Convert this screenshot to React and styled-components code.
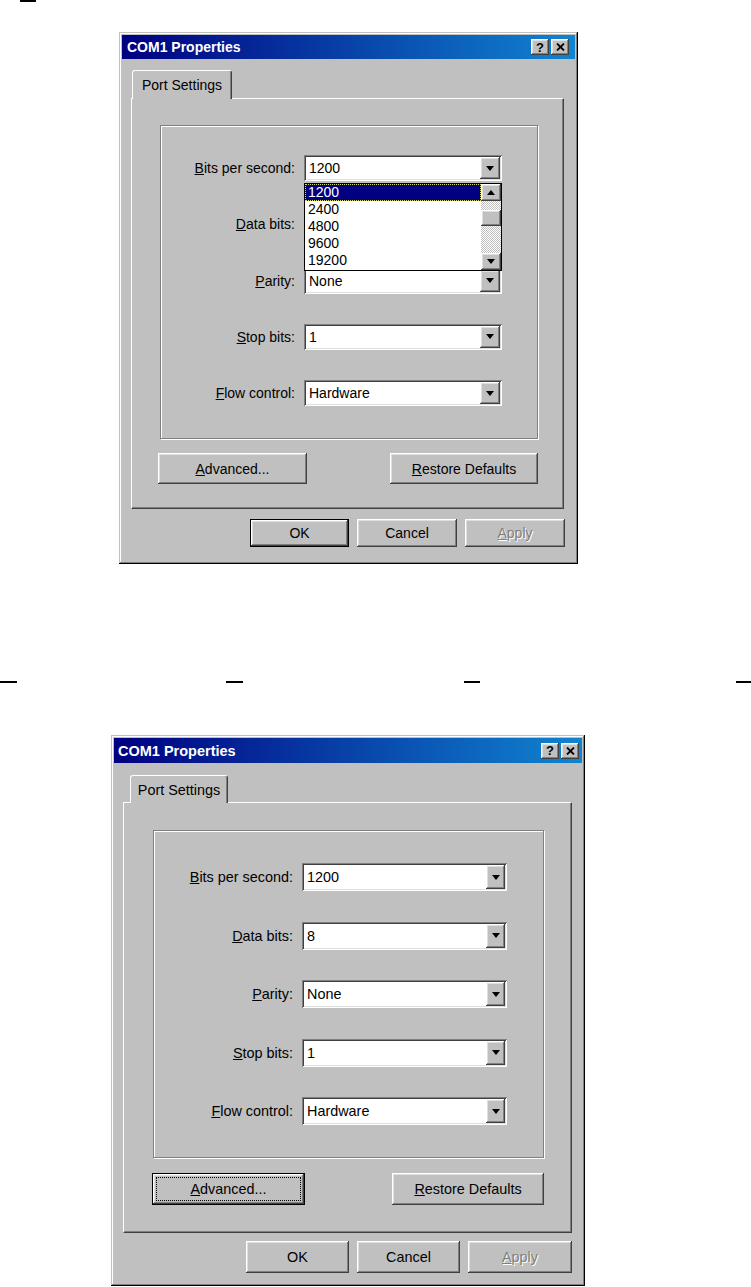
import React from "react";
import styled, { createGlobalStyle, css } from "styled-components";

const GlobalStyle = createGlobalStyle`
  html, body { margin: 0; padding: 0; background: #ffffff; }
  body { font-family: "Liberation Sans", Arial, sans-serif; color: #000; }
`;

const raised = css`
  box-shadow: inset -1px -1px #404040, inset 1px 1px #ffffff,
    inset -2px -2px #808080, inset 2px 2px #dfdfdf;
`;
const sunken = css`
  box-shadow: inset 1px 1px #808080, inset -1px -1px #ffffff,
    inset 2px 2px #404040, inset -2px -2px #dfdfdf;
`;

const Page = styled.div`
  width: 751px;
  height: 1287px;
  overflow: hidden;
  display: flex;
  flex-direction: column;
  align-items: flex-start;
`;

const TopMark = styled.div`
  margin-left: 20px;
  width: 16px;
  height: 2px;
  background: #000;
`;

const DashRow = styled.div`
  display: flex;
  margin-top: 117px;
  height: 2px;
`;

const Dash = styled.span`
  display: block;
  width: ${(p) => p.$w}px;
  height: 2px;
  margin-left: ${(p) => p.$gap}px;
  background: #000;
`;

const Window = styled.div`
  margin: ${({ $m }) => $m.mt}px 0 0 ${({ $m }) => $m.ml}px;
  width: ${({ $m }) => $m.w}px;
  height: ${({ $m }) => $m.h}px;
  box-sizing: border-box;
  padding: 3px;
  background: #c0c0c0;
  box-shadow: inset -1px -1px #000000, inset 1px 1px #c0c0c0,
    inset -2px -2px #808080, inset 2px 2px #ffffff;
  display: flex;
  flex-direction: column;
`;

const TitleBar = styled.div`
  height: ${({ $m }) => $m.titleH}px;
  display: flex;
  align-items: center;
  padding: 0 ${({ $m }) => $m.ctrlMr}px 0 ${({ $m }) => $m.titlePad}px;
  background: linear-gradient(to right, #000080, #1084d0);
  color: #fff;
  font-weight: bold;
  font-size: ${({ $m }) => $m.titleFs}px;
`;

const TitleText = styled.span`
  flex: 1;
  white-space: nowrap;
`;

const TitleControls = styled.div`
  display: flex;
  gap: 2px;
`;

const TitleButton = styled.span`
  width: 18px;
  height: 16px;
  box-sizing: border-box;
  background: #c0c0c0;
  ${raised}
  display: flex;
  align-items: center;
  justify-content: center;
  color: #000;
  font-size: 13px;
  font-weight: bold;
  line-height: 1;
`;

const TabStrip = styled.div`
  display: flex;
  margin-top: ${({ $m }) => $m.tabT}px;
  padding-left: ${({ $m }) => $m.tabL}px;
  position: relative;
  z-index: 1;
`;

const Tab = styled.div`
  width: ${({ $m }) => $m.tabW}px;
  height: ${({ $m }) => $m.tabH}px;
  margin-bottom: -1px;
  box-sizing: border-box;
  background: #c0c0c0;
  border-left: 1px solid #fff;
  border-top: 1px solid #fff;
  border-right: 1px solid #404040;
  border-radius: 3px 3px 0 0;
  box-shadow: inset -1px 0 #808080;
  display: flex;
  align-items: center;
  justify-content: center;
  font-size: ${({ $m }) => $m.fs}px;
`;

const Panel = styled.div`
  margin: 0 ${({ $m }) => $m.panelMr}px 0 ${({ $m }) => $m.panelMl}px;
  height: ${({ $m }) => $m.panelH}px;
  box-sizing: border-box;
  border-top: 1px solid #fff;
  border-left: 1px solid #fff;
  border-right: 1px solid #404040;
  border-bottom: 1px solid #404040;
  box-shadow: inset -1px -1px #808080;
  display: flex;
  flex-direction: column;
  align-items: flex-start;
`;

const Group = styled.div`
  margin: ${({ $m }) => $m.groupT}px 0 0 ${({ $m }) => $m.groupL}px;
  width: ${({ $m }) => $m.groupW}px;
  height: ${({ $m }) => $m.groupH}px;
  box-sizing: border-box;
  padding-top: ${({ $m }) => $m.rowsPt}px;
  border: 1px solid #808080;
  box-shadow: inset 1px 1px #fff, 1px 1px #fff;
  display: grid;
  grid-template-columns: ${({ $m }) => `${$m.labelW}px ${$m.comboW}px`};
  grid-auto-rows: ${({ $m }) => $m.rowH}px;
  column-gap: 9px;
  row-gap: ${({ $m }) => $m.rowGap}px;
  align-content: start;
`;

const Label = styled.span`
  align-self: center;
  text-align: right;
  white-space: nowrap;
  font-size: ${({ $m }) => $m.fs}px;
`;

const Combo = styled.div`
  position: relative;
  box-sizing: border-box;
  padding: 2px;
  background: #fff;
  ${sunken}
  display: flex;
  align-items: stretch;
`;

const ComboText = styled.span`
  flex: 1;
  display: flex;
  align-items: center;
  padding-left: 3px;
  font-size: ${({ $m }) => $m.fs}px;
  visibility: ${(p) => (p.$covered ? "hidden" : "visible")};
`;

const DropButton = styled.span`
  width: ${({ $m }) => $m.dropW}px;
  box-sizing: border-box;
  background: #c0c0c0;
  ${raised}
  display: flex;
  align-items: center;
  justify-content: center;
`;

const ListBox = styled.div`
  position: absolute;
  left: 0;
  top: calc(100% + 2px);
  width: 100%;
  height: 88px;
  box-sizing: border-box;
  border: 1px solid #000;
  background: #fff;
  display: flex;
  z-index: 5;
`;

const ListItems = styled.ul`
  flex: 1;
  margin: 0;
  padding: 0;
  list-style: none;
`;

const ListItem = styled.li`
  height: 17px;
  line-height: 17px;
  padding-left: 3px;
  font-size: 14px;
  ${(p) =>
    p.$selected &&
    css`
      background: #000080;
      color: #fff;
      outline: 1px dotted #d8d870;
      outline-offset: -1px;
    `}
`;

const ScrollBar = styled.div`
  width: 20px;
  display: flex;
  flex-direction: column;
  background: repeating-conic-gradient(#c0c0c0 0 25%, #ffffff 0 50%) 0 0 / 2px 2px;
`;

const ScrollButton = styled.div`
  height: 17px;
  background: #c0c0c0;
  ${raised}
  display: flex;
  align-items: center;
  justify-content: center;
`;

const Track = styled.div`
  flex: 1;
`;

const Thumb = styled.div`
  height: 16px;
  margin-top: 9px;
  background: #c0c0c0;
  ${raised}
`;

const ButtonRow = styled.div`
  display: flex;
  gap: ${({ $m }) => $m.btnGap}px;
  margin: ${({ $m }) => $m.btnRowT}px 0 0 ${({ $m }) => $m.btnRowL}px;
`;

const Footer = styled.div`
  display: flex;
  justify-content: flex-end;
  gap: 8px;
  margin: ${({ $m }) => $m.footT}px ${({ $m }) => $m.footMr}px 0 0;
`;

const PushButton = styled.button`
  position: relative;
  width: ${(p) => p.$w}px;
  height: ${(p) => p.$h}px;
  box-sizing: border-box;
  border: none;
  padding: 0;
  background: #c0c0c0;
  font-family: inherit;
  font-size: ${(p) => p.$fs}px;
  color: #000;
  ${raised}
  ${(p) =>
    p.$default &&
    css`
      border: 1px solid #000;
    `}
  ${(p) =>
    p.$focused &&
    css`
      &::after {
        content: "";
        position: absolute;
        inset: 3px;
        border: 1px dotted #000;
      }
    `}
  ${(p) =>
    p.$disabled &&
    css`
      color: #808080;
      text-shadow: 1px 1px #fff;
    `}
`;

const DownArrow = () => (
  <svg width="8" height="5" viewBox="0 0 8 5">
    <path d="M0 0h8L4 5z" fill="#000" />
  </svg>
);

const UpArrow = () => (
  <svg width="8" height="5" viewBox="0 0 8 5">
    <path d="M0 5h8L4 0z" fill="#000" />
  </svg>
);

const CloseGlyph = () => (
  <svg width="9" height="8" viewBox="0 0 9 8">
    <path d="M1 0.5l7 7M8 0.5l-7 7" stroke="#000" strokeWidth="1.8" />
  </svg>
);

const mn = (text) => (
  <>
    <u>{text[0]}</u>
    {text.slice(1)}
  </>
);

const fields = [
  { label: "Bits per second:", value: "1200" },
  { label: "Data bits:", value: "8" },
  { label: "Parity:", value: "None" },
  { label: "Stop bits:", value: "1" },
  { label: "Flow control:", value: "Hardware" },
];

const speeds = ["1200", "2400", "4800", "9600", "19200"];

const first = {
  ml: 119, mt: 30, w: 459, h: 532,
  titleH: 24, titleFs: 14, titlePad: 5, ctrlMr: 6,
  tabT: 11, tabL: 10, tabW: 100, tabH: 29,
  panelMl: 9, panelMr: 11, panelH: 411,
  groupT: 26, groupL: 28, groupW: 378, groupH: 314,
  rowsPt: 29, rowH: 26, rowGap: 30.25, labelW: 134, comboW: 198,
  fs: 14, dropW: 20,
  btnRowT: 14, btnRowL: 26, advW: 149, btnGap: 83, resW: 148, btnH: 31,
  footT: 10, footMr: 10, okW: 99, cancelW: 100, applyW: 100, footH: 28,
};

const second = {
  ml: 111, mt: 52, w: 474, h: 551,
  titleH: 25, titleFs: 14.5, titlePad: 4, ctrlMr: 3,
  tabT: 12, tabL: 16, tabW: 98, tabH: 28,
  panelMl: 9, panelMr: 10, panelH: 431,
  groupT: 27, groupL: 29, groupW: 391, groupH: 328,
  rowsPt: 32, rowH: 28, rowGap: 30.5, labelW: 139, comboW: 205,
  fs: 14.4, dropW: 19,
  btnRowT: 15, btnRowL: 28, advW: 153, btnGap: 87, resW: 152, btnH: 32,
  footT: 8, footMr: 10, okW: 103, cancelW: 103, applyW: 104, footH: 32,
};

function PortDialog({ m, open, focusAdvanced }) {
  return (
    <Window $m={m}>
      <TitleBar $m={m}>
        <TitleText>COM1 Properties</TitleText>
        <TitleControls>
          <TitleButton>?</TitleButton>
          <TitleButton>
            <CloseGlyph />
          </TitleButton>
        </TitleControls>
      </TitleBar>
      <TabStrip $m={m}>
        <Tab $m={m}>Port Settings</Tab>
      </TabStrip>
      <Panel $m={m}>
        <Group $m={m}>
          {fields.map((f, i) => (
            <React.Fragment key={f.label}>
              <Label $m={m}>{mn(f.label)}</Label>
              <Combo>
                <ComboText $m={m} $covered={open && i === 1}>
                  {f.value}
                </ComboText>
                <DropButton $m={m}>
                  <DownArrow />
                </DropButton>
                {open && i === 0 && (
                  <ListBox>
                    <ListItems>
                      {speeds.map((s, k) => (
                        <ListItem key={s} $selected={k === 0}>
                          {s}
                        </ListItem>
                      ))}
                    </ListItems>
                    <ScrollBar>
                      <ScrollButton>
                        <UpArrow />
                      </ScrollButton>
                      <Track>
                        <Thumb />
                      </Track>
                      <ScrollButton>
                        <DownArrow />
                      </ScrollButton>
                    </ScrollBar>
                  </ListBox>
                )}
              </Combo>
            </React.Fragment>
          ))}
        </Group>
        <ButtonRow $m={m}>
          <PushButton
            $w={m.advW}
            $h={m.btnH}
            $fs={m.fs}
            $default={focusAdvanced}
            $focused={focusAdvanced}
          >
            {mn("Advanced...")}
          </PushButton>
          <PushButton $w={m.resW} $h={m.btnH} $fs={m.fs}>
            {mn("Restore Defaults")}
          </PushButton>
        </ButtonRow>
      </Panel>
      <Footer $m={m}>
        <PushButton $w={m.okW} $h={m.footH} $fs={m.fs} $default={!focusAdvanced}>
          OK
        </PushButton>
        <PushButton $w={m.cancelW} $h={m.footH} $fs={m.fs}>
          Cancel
        </PushButton>
        <PushButton $w={m.applyW} $h={m.footH} $fs={m.fs} $disabled>
          {mn("Apply")}
        </PushButton>
      </Footer>
    </Window>
  );
}

export default function App() {
  return (
    <Page>
      <GlobalStyle />
      <TopMark />
      <PortDialog m={first} open />
      <DashRow>
        <Dash $gap={0} $w={17} />
        <Dash $gap={209} $w={17} />
        <Dash $gap={221} $w={16} />
        <Dash $gap={256} $w={15} />
      </DashRow>
      <PortDialog m={second} focusAdvanced />
    </Page>
  );
}
